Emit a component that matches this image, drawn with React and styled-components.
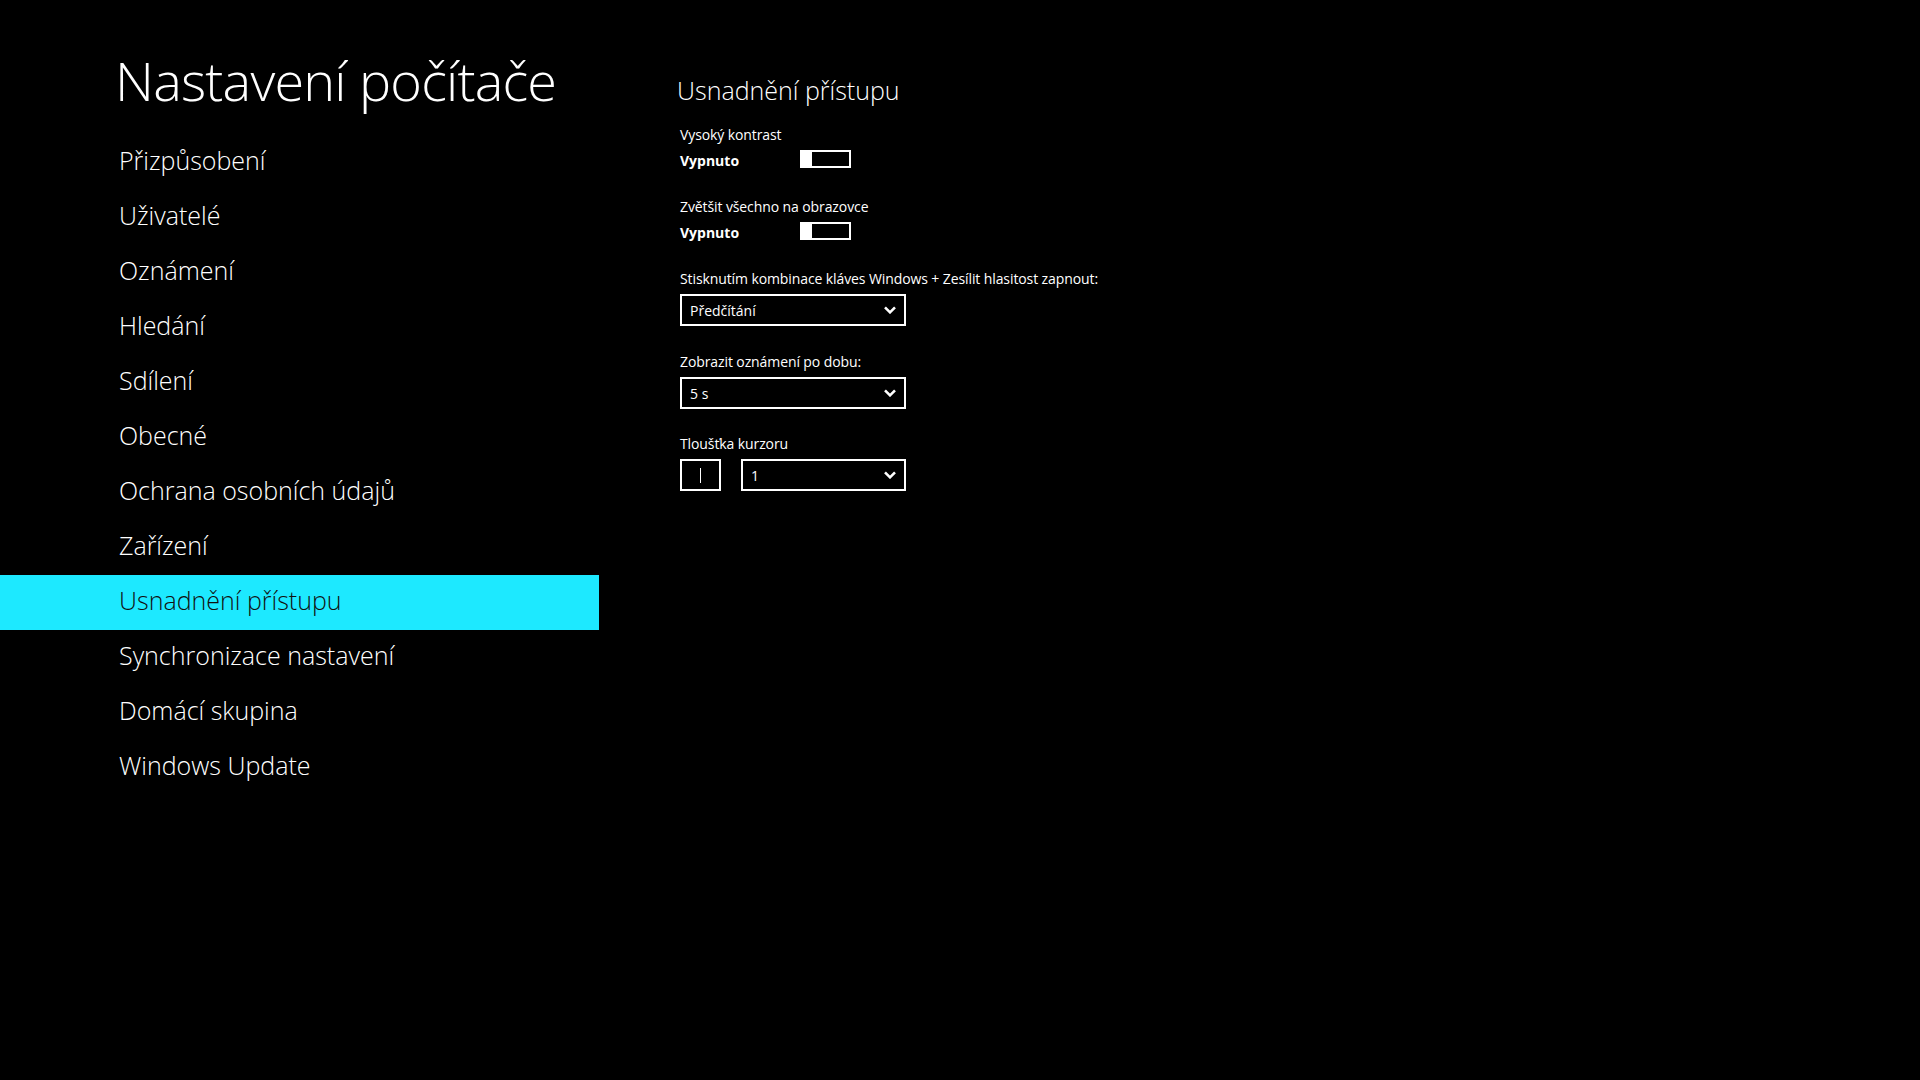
import React from "react";
import styled, { createGlobalStyle } from "styled-components";

const Global = createGlobalStyle`
  html, body { margin: 0; padding: 0; background: #000; }
  body { font-family: "Open Sans", "Noto Sans", sans-serif; color: #fff; }
  * { box-sizing: border-box; }
`;

const Page = styled.div`
  display: flex;
  width: 1920px;
  height: 1080px;
  background: #000;
  overflow: hidden;
`;

const Sidebar = styled.aside`
  width: 599px;
  flex: none;
  padding-top: 48px;
  display: flex;
  flex-direction: column;
`;

const Title = styled.h1`
  margin: 0 0 23px 0;
  padding-left: 115px;
  font-family: "Open Sans", sans-serif;
  font-weight: 300;
  font-size: 54px;
  line-height: 64px;
  letter-spacing: -0.8px;
  color: #fff;
  white-space: nowrap;
`;

const NavList = styled.nav`
  display: flex;
  flex-direction: column;
`;

const NavItem = styled.div`
  height: 55px;
  padding-left: 119px;
  padding-bottom: 5px;
  display: flex;
  align-items: center;
  font-weight: 300;
  font-size: 25px;
  line-height: 50px;
  color: ${(p) => (p.$active ? "#111" : "#fff")};
  background: ${(p) => (p.$active ? "#1de9ff" : "transparent")};
  white-space: nowrap;
`;

const Content = styled.main`
  flex: 1;
  padding-left: 81px;
  padding-top: 74px;
  display: flex;
  flex-direction: column;
`;

const Heading = styled.h2`
  margin: 0 0 19px -3px;
  font-weight: 300;
  font-size: 25px;
  line-height: 32px;
  color: #fff;
`;

const Group = styled.section`
  display: flex;
  flex-direction: column;
  gap: 5px;
  margin-bottom: ${(p) => p.$gap}px;
`;

const Label = styled.div`
  font-size: 14px;
  line-height: 20px;
  letter-spacing: -0.1px;
  color: #fff;
  white-space: nowrap;
`;

const ToggleRow = styled.div`
  display: flex;
  align-items: flex-start;
  height: 20px;
`;

const ToggleState = styled.span`
  width: 120px;
  padding-top: 2px;
  font-weight: 700;
  font-size: 14px;
  line-height: 18px;
`;

const Toggle = styled.div`
  width: 51px;
  height: 18px;
  border: 2px solid #fff;
  display: flex;
`;

const Thumb = styled.div`
  width: 10px;
  height: 100%;
  background: #fff;
`;

const Select = styled.div`
  width: ${(p) => p.$width}px;
  height: 32px;
  border: 2px solid #fff;
  display: flex;
  align-items: center;
  justify-content: space-between;
  padding: 0 8px 0 8px;
  font-size: 14px;
  color: #fff;
`;

const Row = styled.div`
  display: flex;
  gap: 20px;
`;

const CursorBox = styled.div`
  width: 41px;
  height: 32px;
  border: 2px solid #fff;
  display: flex;
  align-items: center;
  justify-content: center;
`;

const CursorLine = styled.div`
  width: 1.5px;
  height: 15px;
  background: #fff;
`;

const Chevron = () => (
  <svg width="12" height="8" viewBox="0 0 12 8">
    <polyline points="1,1.3 6,6.3 11,1.3" fill="none" stroke="#fff" strokeWidth="2.6" />
  </svg>
);

const navItems = [
  "Přizpůsobení",
  "Uživatelé",
  "Oznámení",
  "Hledání",
  "Sdílení",
  "Obecné",
  "Ochrana osobních údajů",
  "Zařízení",
  "Usnadnění přístupu",
  "Synchronizace nastavení",
  "Domácí skupina",
  "Windows Update",
];

export default function App() {
  return (
    <>
      <Global />
      <Page>
        <Sidebar>
          <Title>Nastavení počítače</Title>
          <NavList>
            {navItems.map((n) => (
              <NavItem key={n} $active={n === "Usnadnění přístupu"}>
                {n}
              </NavItem>
            ))}
          </NavList>
        </Sidebar>
        <Content>
          <Heading>Usnadnění přístupu</Heading>
          <Group $gap={27}>
            <Label>Vysoký kontrast</Label>
            <ToggleRow>
              <ToggleState>Vypnuto</ToggleState>
              <Toggle>
                <Thumb />
              </Toggle>
            </ToggleRow>
          </Group>
          <Group $gap={27}>
            <Label>Zvětšit všechno na obrazovce</Label>
            <ToggleRow>
              <ToggleState>Vypnuto</ToggleState>
              <Toggle>
                <Thumb />
              </Toggle>
            </ToggleRow>
          </Group>
          <Group $gap={26}>
            <Label>Stisknutím kombinace kláves Windows + Zesílit hlasitost zapnout:</Label>
            <Select $width={226}>
              <span>Předčítání</span>
              <Chevron />
            </Select>
          </Group>
          <Group $gap={25}>
            <Label>Zobrazit oznámení po dobu:</Label>
            <Select $width={226}>
              <span>5 s</span>
              <Chevron />
            </Select>
          </Group>
          <Group $gap={0}>
            <Label>Tloušťka kurzoru</Label>
            <Row>
              <CursorBox>
                <CursorLine />
              </CursorBox>
              <Select $width={165}>
                <span>1</span>
                <Chevron />
              </Select>
            </Row>
          </Group>
        </Content>
      </Page>
    </>
  );
}
